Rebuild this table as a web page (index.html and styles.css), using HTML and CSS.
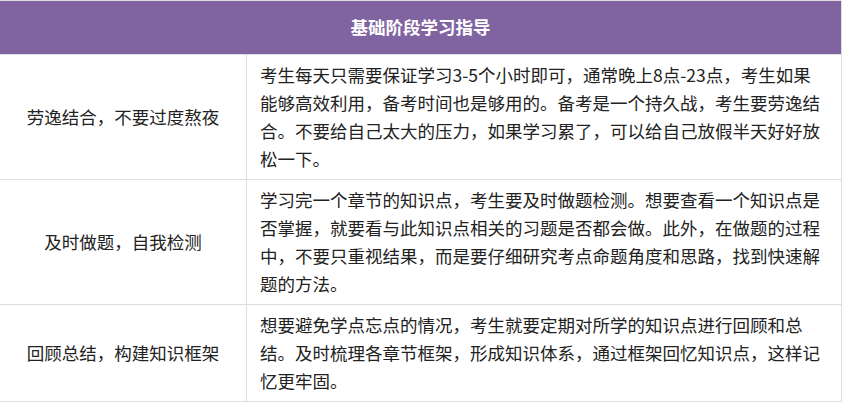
FILE: index.html
```html
<!DOCTYPE html>
<html lang="zh-CN">
<head>
<meta charset="utf-8">
<title>基础阶段学习指导</title>
<link rel="stylesheet" href="styles.css">
</head>
<body>
<div class="guide">
  <div class="guide-head">基础阶段学习指导</div>
  <div class="guide-key">劳逸结合，不要过度熬夜</div>
  <div class="guide-text">考生每天只需要保证学习3-5个小时即可，通常晚上8点-23点，考生如果能够高效利用，备考时间也是够用的。备考是一个持久战，考生要劳逸结合。不要给自己太大的压力，如果学习累了，可以给自己放假半天好好放松一下。</div>
  <div class="guide-key">及时做题，自我检测</div>
  <div class="guide-text">学习完一个章节的知识点，考生要及时做题检测。想要查看一个知识点是否掌握，就要看与此知识点相关的习题是否都会做。此外，在做题的过程中，不要只重视结果，而是要仔细研究考点命题角度和思路，找到快速解题的方法。</div>
  <div class="guide-key">回顾总结，构建知识框架</div>
  <div class="guide-text">想要避免学点忘点的情况，考生就要定期对所学的知识点进行回顾和总结。及时梳理各章节框架，形成知识体系，通过框架回忆知识点，这样记忆更牢固。</div>
</div>
</body>
</html>
```

FILE: styles.css
```css
html, body {
  margin: 0;
  padding: 0;
  background: #ffffff;
}

.guide {
  box-sizing: border-box;
  width: 842px;
  display: grid;
  grid-template-columns: 247px 1fr;
  border-top: 1px solid #dddddd;
  border-right: 1px solid #dddddd;
  font-family: "Noto Sans CJK SC", "Noto Sans", sans-serif;
  font-size: 17.5px;
  line-height: 28px;
  color: #222222;
}

.guide-head {
  grid-column: 1 / 3;
  background: #8064a2;
  color: #ffffff;
  font-weight: bold;
  text-align: center;
  padding: 12px 0 13px;
  border-bottom: 1px solid #dddddd;
}

.guide-key {
  box-sizing: border-box;
  display: flex;
  align-items: center;
  justify-content: center;
  text-align: center;
  border-right: 1px solid #dddddd;
  border-bottom: 1px solid #dddddd;
  padding: 6px 8px;
}

.guide-text {
  border-bottom: 1px solid #dddddd;
  padding: 6px 19px 6px 13px;
}
```
